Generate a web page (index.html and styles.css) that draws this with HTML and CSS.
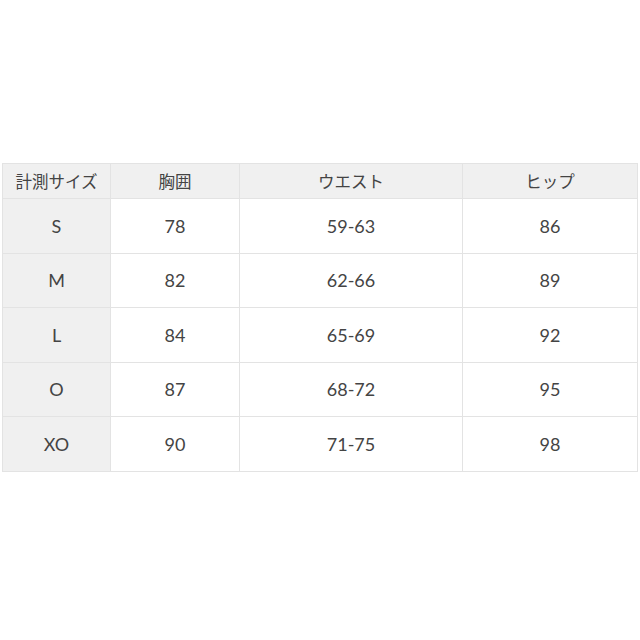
FILE: index.html
```html
<!DOCTYPE html>
<html lang="ja">
<head>
<meta charset="utf-8">
<link rel="stylesheet" href="styles.css">
</head>
<body>
<div class="page">
  <table class="size-table">
    <colgroup>
      <col class="c1"><col class="c2"><col class="c3"><col class="c4">
    </colgroup>
    <thead>
      <tr><th>計測サイズ</th><th>胸囲</th><th>ウエスト</th><th>ヒップ</th></tr>
    </thead>
    <tbody>
      <tr><th>S</th><td>78</td><td>59-63</td><td>86</td></tr>
      <tr><th>M</th><td>82</td><td>62-66</td><td>89</td></tr>
      <tr><th>L</th><td>84</td><td>65-69</td><td>92</td></tr>
      <tr><th>O</th><td>87</td><td>68-72</td><td>95</td></tr>
      <tr><th>XO</th><td>90</td><td>71-75</td><td>98</td></tr>
    </tbody>
  </table>
</div>
</body>
</html>
```
FILE: styles.css
```css
html, body {
  margin: 0;
  padding: 0;
  background: #ffffff;
}
.page {
  width: 640px;
  height: 640px;
  padding: 163px 0 0 2px;
  box-sizing: border-box;
}
.size-table {
  width: 635px;
  border-collapse: collapse;
  table-layout: fixed;
  font-family: Lato, "Noto Sans CJK JP", sans-serif;
  font-size: 18px;
  color: #444444;
}
.c1 { width: 108px; }
.c2 { width: 129px; }
.c3 { width: 223px; }
.c4 { width: 175px; }
.size-table th,
.size-table td {
  border: 1px solid #e3e3e3;
  text-align: center;
  font-weight: normal;
  padding: 0;
}
.size-table thead th {
  height: 34px;
  background: #f0f0f0;
  font-family: "Noto Sans CJK JP", sans-serif;
  font-size: 16.5px;
}
.size-table tbody th {
  background: #f0f0f0;
  height: 53.5px;
}
.size-table tbody td {
  height: 53.5px;
  background: #ffffff;
}
```
